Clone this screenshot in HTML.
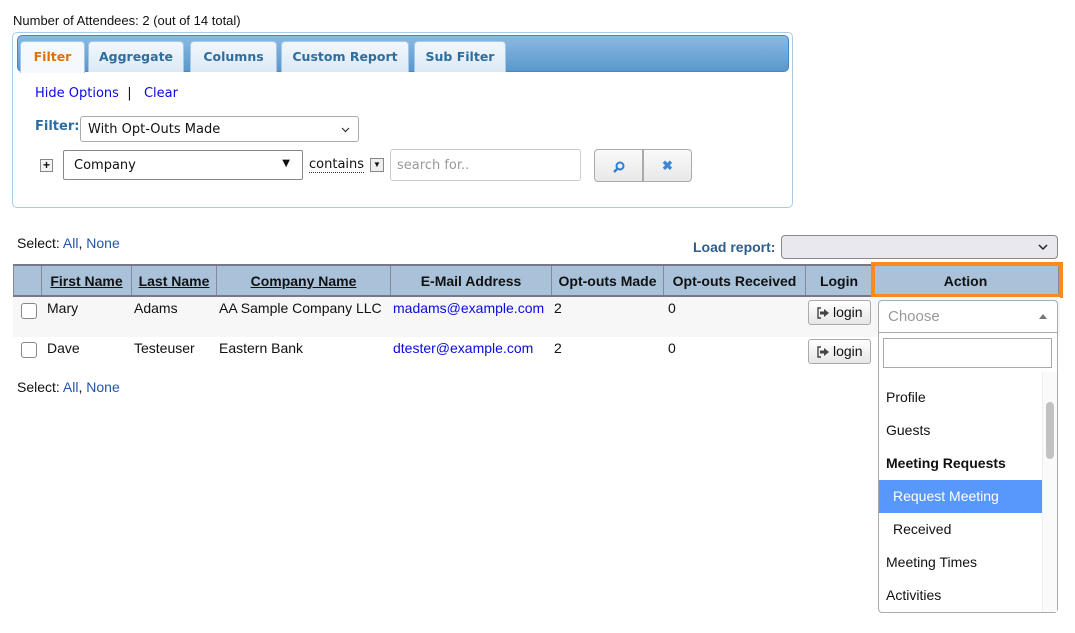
<!DOCTYPE html>
<html><head><meta charset="utf-8"><style>
*{box-sizing:border-box;margin:0;padding:0}
body{width:1075px;height:633px;background:#fff;font-family:"Liberation Sans",Arial,sans-serif;font-size:14px;color:#111;position:relative;overflow:hidden}
.a{position:absolute;white-space:nowrap}
.tab{position:absolute;top:41px;height:31px;background:linear-gradient(#f2f7fc,#dce9f5);border:1px solid #a7c7e6;border-bottom:none;border-radius:4px 4px 0 0;font-family:"DejaVu Sans",sans-serif;font-weight:bold;font-size:12.5px;color:#2e6e9e;text-align:center;line-height:30px}
.lnk{color:#0a0ae0}
.sel{position:absolute;background:#fff;border:1px solid #aaa;border-radius:3px}
th{background:#a9c2d9;font-weight:bold;font-size:14px;border-right:1px solid #889;height:31px;padding:0;text-align:center}
.u{text-decoration:underline}
.cb{position:absolute;left:21px;width:16px;height:16px;border:1px solid #888;border-radius:3px;background:#fff}
.btn{position:absolute;left:808px;width:63px;height:25px;border:1px solid #aaa;border-radius:3px;background:linear-gradient(#fff,#e6e6e6);font-size:14px;line-height:23px;padding-left:24px}
.btn svg{position:absolute;left:7px;top:6px}
.it{position:absolute;left:886px;font-size:14px}
</style></head><body>
<div class="a" style="left:13px;top:13px;font-size:13px">Number of Attendees: 2 (out of 14 total)</div>
<div class="a" style="left:12px;top:32px;width:781px;height:176px;border:1px solid #a8cbe9;border-radius:5px"></div>
<div class="a" style="left:17px;top:35px;width:772px;height:37px;border-radius:5px;background:linear-gradient(#8ab9e2,#5b98cd);border:1px solid #4a86c0"></div>
<div class="tab" style="left:20px;width:65px;color:#e17009;background:#f5f9fd;height:32px">Filter</div>
<div class="tab" style="left:88px;width:96px">Aggregate</div>
<div class="tab" style="left:190px;width:87px">Columns</div>
<div class="tab" style="left:281px;width:128px">Custom Report</div>
<div class="tab" style="left:414px;width:92px">Sub Filter</div>
<div class="a" style="left:35px;top:86px;font-family:'DejaVu Sans',sans-serif;font-size:13px"><span class="lnk">Hide Options</span> &nbsp;| &nbsp; <span class="lnk">Clear</span></div>
<div class="a" style="left:35px;top:119px;font-family:'DejaVu Sans',sans-serif;font-size:13px;font-weight:bold;color:#2e6e9e">Filter:</div>
<div class="sel" style="left:80px;top:116px;width:279px;height:26px;font-family:'DejaVu Sans',sans-serif;font-size:13px;padding:5px 7px">With Opt-Outs Made<svg width="9" height="6" viewBox="0 0 9 6" style="position:absolute;right:8px;top:10px"><path d="M1 1l3.5 3.5L8 1" fill="none" stroke="#333" stroke-width="1.2"/></svg></div>
<div class="a" style="left:40px;top:159px;width:13px;height:13px;border:1px solid #888;font-size:12px;line-height:10px;text-align:center;font-weight:bold;background:#f4f4f4">+</div>
<div class="sel" style="left:63px;top:150px;width:240px;height:30px;border-color:#888;border-radius:2px;font-family:'DejaVu Sans',sans-serif;font-size:13px;padding:7px 10px">Company<span style="position:absolute;right:12px;top:7px;font-size:10px">&#9660;</span></div>
<div class="a" style="left:309px;top:157px;font-family:'DejaVu Sans',sans-serif;font-size:13px;border-bottom:1px dotted #333">contains</div>
<div class="a" style="left:370px;top:158px;width:14px;height:14px;border:1px solid #888;font-size:8px;text-align:center;line-height:12px;background:#eee">&#9660;</div>
<div class="sel" style="left:390px;top:149px;width:191px;height:32px;border-color:#ccc;font-family:'DejaVu Sans',sans-serif;font-size:13px;color:#999;padding:8px 6px">search for..</div>
<div class="a" style="left:594px;top:149px;width:49px;height:33px;border:1px solid #aaa;border-radius:4px 0 0 4px;background:linear-gradient(#fafafa,#e8e8e8)"><svg width="14" height="14" viewBox="0 0 14 14" style="position:absolute;left:17px;top:10px"><circle cx="8" cy="6" r="3.5" fill="none" stroke="#2b7fd4" stroke-width="2"/><path d="M5.5 8.5L2 12" stroke="#2b7fd4" stroke-width="2.4"/></svg></div>
<div class="a" style="left:643px;top:149px;width:49px;height:33px;border:1px solid #aaa;border-radius:0 4px 4px 0;background:linear-gradient(#fafafa,#e8e8e8);color:#3a88d6;font-weight:bold;text-align:center;line-height:31px;font-size:13px">&#10006;</div>

<div class="a" style="left:17px;top:235px;font-size:14px">Select: <span style="color:#2255aa">All</span>, <span style="color:#2255aa">None</span></div>
<div class="a" style="left:693px;top:239px;font-weight:bold;color:#2e5e8e;font-size:14px">Load report:</div>
<div class="sel" style="left:781px;top:235px;width:277px;height:24px;background:#e8e8ee;border-color:#888;border-radius:4px"><svg width="10" height="7" viewBox="0 0 10 7" style="position:absolute;right:9px;top:8px"><path d="M1 1l4 4 4-4" fill="none" stroke="#222" stroke-width="1.5"/></svg></div>

<table class="a" style="left:13px;top:264px;border-collapse:collapse;border-top:2px solid #778;border-bottom:2px solid #778">
<tr><th style="width:28px;border-left:1px solid #889"></th><th style="width:90px" class="u">First Name</th><th style="width:85px" class="u">Last Name</th><th style="width:174px" class="u">Company Name</th><th style="width:161px">E-Mail Address</th><th style="width:112px">Opt-outs Made</th><th style="width:142px">Opt-outs Received</th><th style="width:67px">Login</th><th style="width:186px">Action</th></tr></table>
<div class="a" style="left:871px;top:262px;width:192px;height:36px;border:4px solid #f68b1f"></div>
<div class="a" style="left:13px;top:297px;width:1047px;height:40px;background:#f7f7f7"></div>
<div class="cb" style="top:303px"></div><div class="cb" style="top:342px"></div>
<div class="a" style="left:47px;top:300px">Mary</div><div class="a" style="left:134px;top:300px">Adams</div><div class="a" style="left:219px;top:300px">AA Sample Company LLC</div><div class="a lnk" style="left:393px;top:300px">madams@example.com</div><div class="a" style="left:554px;top:300px">2</div><div class="a" style="left:668px;top:300px">0</div>
<div class="a" style="left:47px;top:340px">Dave</div><div class="a" style="left:134px;top:340px">Testeuser</div><div class="a" style="left:219px;top:340px">Eastern Bank</div><div class="a lnk" style="left:393px;top:340px">dtester@example.com</div><div class="a" style="left:554px;top:340px">2</div><div class="a" style="left:668px;top:340px">0</div>
<div class="btn" style="top:300px"><svg width="14" height="12" viewBox="0 0 14 12"><path d="M5 1H2v10h3" fill="none" stroke="#444" stroke-width="1.4"/><path d="M4 4.5h4V2l5 4-5 4V7.5H4z" fill="#444"/></svg>login</div>
<div class="btn" style="top:339px"><svg width="14" height="12" viewBox="0 0 14 12"><path d="M5 1H2v10h3" fill="none" stroke="#444" stroke-width="1.4"/><path d="M4 4.5h4V2l5 4-5 4V7.5H4z" fill="#444"/></svg>login</div>
<div class="a" style="left:17px;top:379px">Select: <span style="color:#2255aa">All</span>, <span style="color:#2255aa">None</span></div>

<div class="a" style="left:878px;top:300px;width:180px;height:313px;border:1px solid #aaa;border-radius:4px;background:#fff"></div>
<div class="a" style="left:878px;top:332px;width:180px;height:1px;background:#aaa"></div>
<div class="a" style="left:888px;top:308px;color:#999;font-size:15px">Choose</div>
<svg class="a" style="left:1038px;top:313px" width="10" height="7" viewBox="0 0 10 7"><path d="M1 6l4-5 4 5z" fill="#777"/></svg>
<div class="a" style="left:883px;top:338px;width:169px;height:30px;border:1px solid #aaa"></div>
<div class="a" style="left:1042px;top:372px;width:15px;height:240px;background:#fafafa;border-left:1px solid #eee"></div>
<div class="a" style="left:1046px;top:402px;width:8px;height:57px;border-radius:4px;background:#c2c2c2"></div>
<div class="it" style="top:389px">Profile</div>
<div class="it" style="top:422px">Guests</div>
<div class="it" style="top:455px;font-weight:bold">Meeting Requests</div>
<div class="a" style="left:879px;top:480px;width:163px;height:33px;background:#5897fb"></div>
<div class="it" style="left:893px;top:488px;color:#fff">Request Meeting</div>
<div class="it" style="left:893px;top:521px">Received</div>
<div class="it" style="top:554px">Meeting Times</div>
<div class="it" style="top:587px">Activities</div>
</body></html>
